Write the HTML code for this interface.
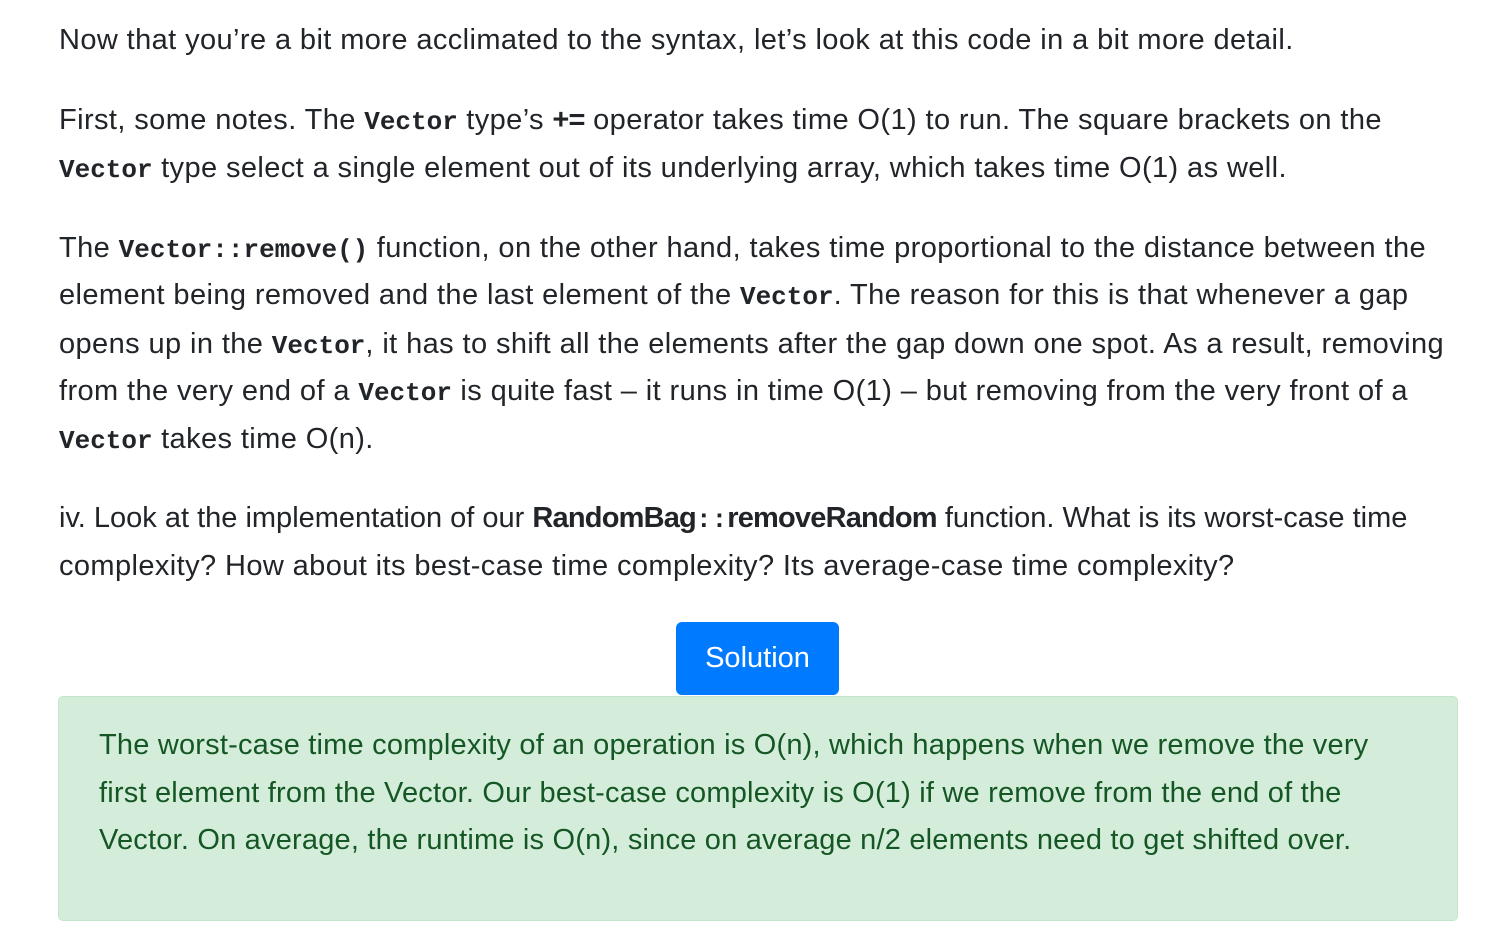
<!DOCTYPE html>
<html><head><meta charset="utf-8"><style>
body{margin:0;width:1505px;height:943px;background:#fff;font-family:"Liberation Sans",sans-serif;color:#212529;position:relative;overflow:hidden}
.l{position:absolute;left:59px;font-size:29px;line-height:48px;height:48px;white-space:nowrap;letter-spacing:0.4px}
code{font-family:"Liberation Mono",monospace;font-weight:bold;font-size:26px;letter-spacing:0}
b{font-weight:bold;letter-spacing:-0.8px}
.btn{position:absolute;left:676px;top:622px;width:163px;height:73px;background:#007bff;border-radius:6px;color:#fff;font-size:29px;line-height:73px;text-align:center}
.box{position:absolute;left:58px;top:696px;width:1398px;height:223px;background:#d4edda;border:1px solid #c3e6cb;border-radius:5px}
.g{color:#155724;left:99px;letter-spacing:0.2px}
</style></head><body>
<div class="l" style="top:16px">Now that you’re a bit more acclimated to the syntax, let’s look at this code in a bit more detail.</div>
<div class="l" style="top:96px">First, some notes. The <code>Vector</code> type’s <b>+=</b> operator takes time O(1) to run. The square brackets on the</div>
<div class="l" style="top:144px"><code>Vector</code> type select a single element out of its underlying array, which takes time O(1) as well.</div>
<div class="l" style="top:224px">The <code>Vector::remove()</code> function, on the other hand, takes time proportional to the distance between the</div>
<div class="l" style="top:271px">element being removed and the last element of the <code>Vector</code>. The reason for this is that whenever a gap</div>
<div class="l" style="top:320px">opens up in the <code>Vector</code>, it has to shift all the elements after the gap down one spot. As a result, removing</div>
<div class="l" style="top:367px">from the very end of a <code>Vector</code> is quite fast – it runs in time O(1) – but removing from the very front of a</div>
<div class="l" style="top:415px"><code>Vector</code> takes time O(n).</div>
<div class="l" style="top:494px;letter-spacing:0">iv. Look at the implementation of our <b>RandomBag</b><code>::</code><b>removeRandom</b> function. What is its worst-case time</div>
<div class="l" style="top:542px">complexity? How about its best-case time complexity? Its average-case time complexity?</div>
<div class="btn">Solution</div>
<div class="box"></div>
<div class="l g" style="top:721px">The worst-case time complexity of an operation is O(n), which happens when we remove the very</div>
<div class="l g" style="top:769px">first element from the Vector. Our best-case complexity is O(1) if we remove from the end of the</div>
<div class="l g" style="top:816px">Vector. On average, the runtime is O(n), since on average n/2 elements need to get shifted over.</div>
</body></html>
